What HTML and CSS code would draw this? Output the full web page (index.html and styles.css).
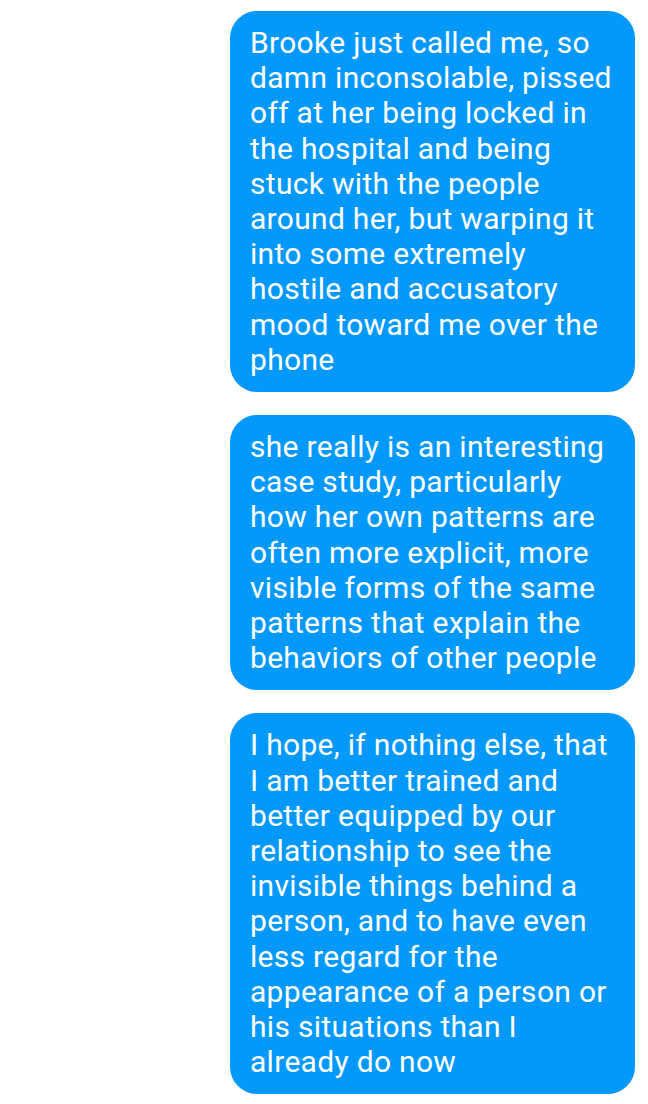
FILE: index.html
```html
<!DOCTYPE html>
<html>
<head>
<meta charset="utf-8">
<link rel="stylesheet" href="styles.css">
</head>
<body>
<div class="thread">
  <div class="bubble">Brooke just called me, so<br>damn inconsolable, pissed<br>off at her being locked in<br>the hospital and being<br>stuck with the people<br>around her, but warping it<br>into some extremely<br>hostile and accusatory<br>mood toward me over the<br>phone</div>
  <div class="bubble">she really is an interesting<br>case study, particularly<br>how her own patterns are<br>often more explicit, more<br>visible forms of the same<br>patterns that explain the<br>behaviors of other people</div>
  <div class="bubble">I hope, if nothing else, that<br>I am better trained and<br>better equipped by our<br>relationship to see the<br>invisible things behind a<br>person, and to have even<br>less regard for the<br>appearance of a person or<br>his situations than I<br>already do now</div>
</div>
</body>
</html>
```
FILE: styles.css
```css
html, body {
  margin: 0;
  padding: 0;
  background: #ffffff;
}
.thread {
  display: flex;
  flex-direction: column;
  align-items: flex-end;
  gap: 23px;
  padding: 11px 13px 0 0;
}
.bubble {
  box-sizing: border-box;
  width: 405px;
  background: #0398fb;
  color: #ffffff;
  border-radius: 27px;
  padding: 14px 8px 15px 20px;
  font-family: Roboto, "Noto Sans", sans-serif;
  font-size: 30px;
  letter-spacing: 0.3px;
  line-height: 35.2px;
  white-space: nowrap;
}
```
